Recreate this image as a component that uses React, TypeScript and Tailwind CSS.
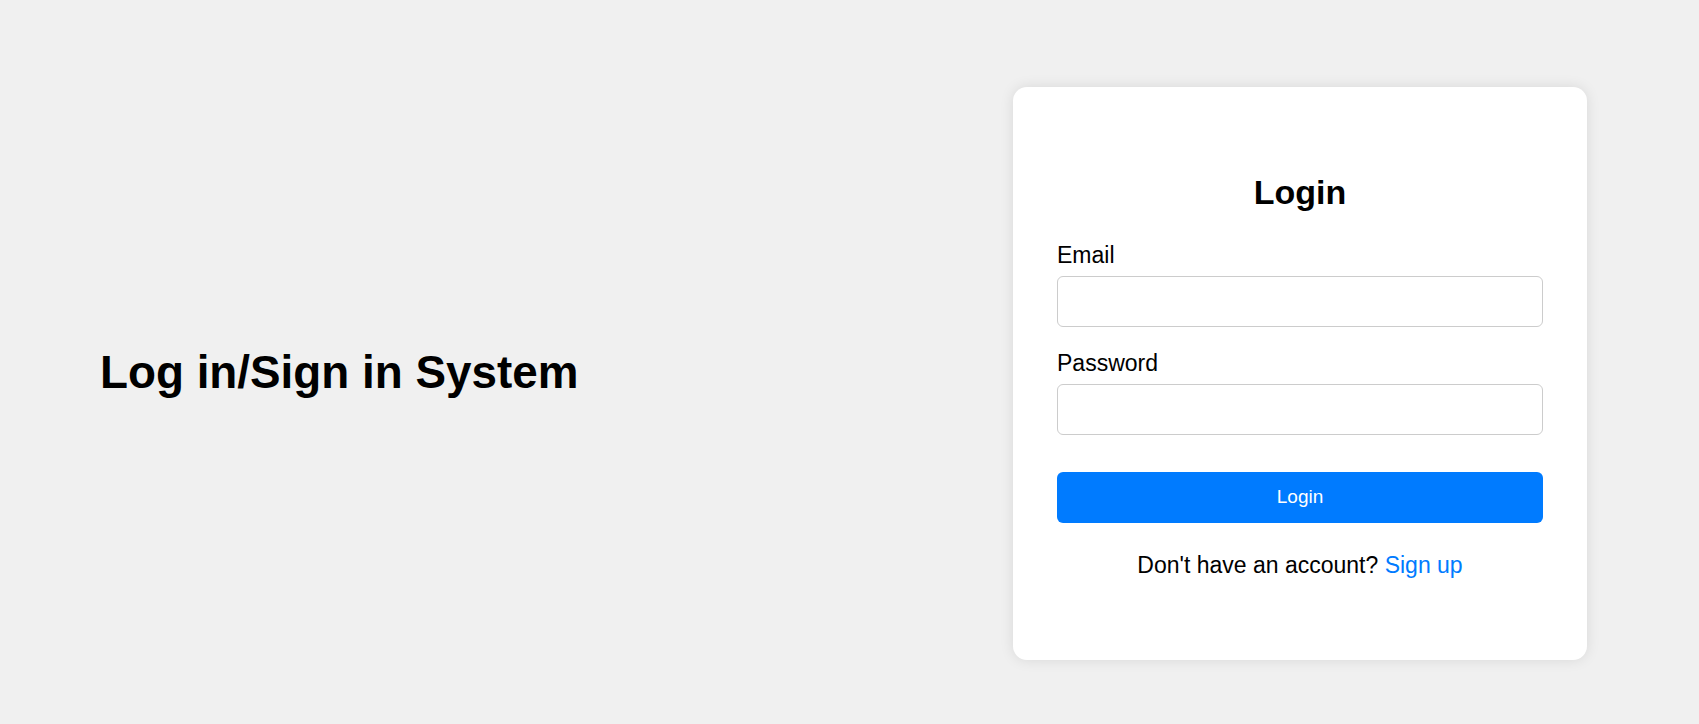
import React from "react";

export default function App() {
  return (
    <div
      className="w-full h-[724px] bg-[#f0f0f0] flex items-center pt-[22px] pl-[100px] pr-[112px] text-black"
      style={{ fontFamily: '"Liberation Sans", Arial, sans-serif' }}
    >
      <div className="flex-1 pb-[2px]">
        <h1 className="text-[45.8px] leading-[53px] font-bold">Log in/Sign in System</h1>
      </div>
      <div className="w-[574px] bg-white rounded-[14px] shadow-[0_0_14px_rgba(0,0,0,0.1)] px-[44px] pt-[86px] pb-[82px]">
        <h2 className="text-[34px] leading-[39px] font-bold text-center">Login</h2>
        <form className="flex flex-col mt-[30px]" onSubmit={(e) => e.preventDefault()}>
          <label className="text-[23px] leading-[26px] mb-[8px]">Email</label>
          <input
            type="email"
            className="h-[51px] w-full border border-[#cccccc] rounded-[6px] px-[14px] text-[23px] outline-none bg-white"
          />
          <label className="text-[23px] leading-[26px] mt-[23px] mb-[8px]">Password</label>
          <input
            type="password"
            className="h-[51px] w-full border border-[#cccccc] rounded-[6px] px-[14px] text-[23px] outline-none bg-white"
          />
          <button
            type="submit"
            className="mt-[37px] h-[51px] w-full bg-[#007bff] text-white rounded-[6px] text-[19px]"
          >
            Login
          </button>
        </form>
        <p className="mt-[29px] text-[23px] leading-[26px] text-center">
          Don't have an account? <a href="#" className="text-[#007bff]">Sign up</a>
        </p>
      </div>
    </div>
  );
}
